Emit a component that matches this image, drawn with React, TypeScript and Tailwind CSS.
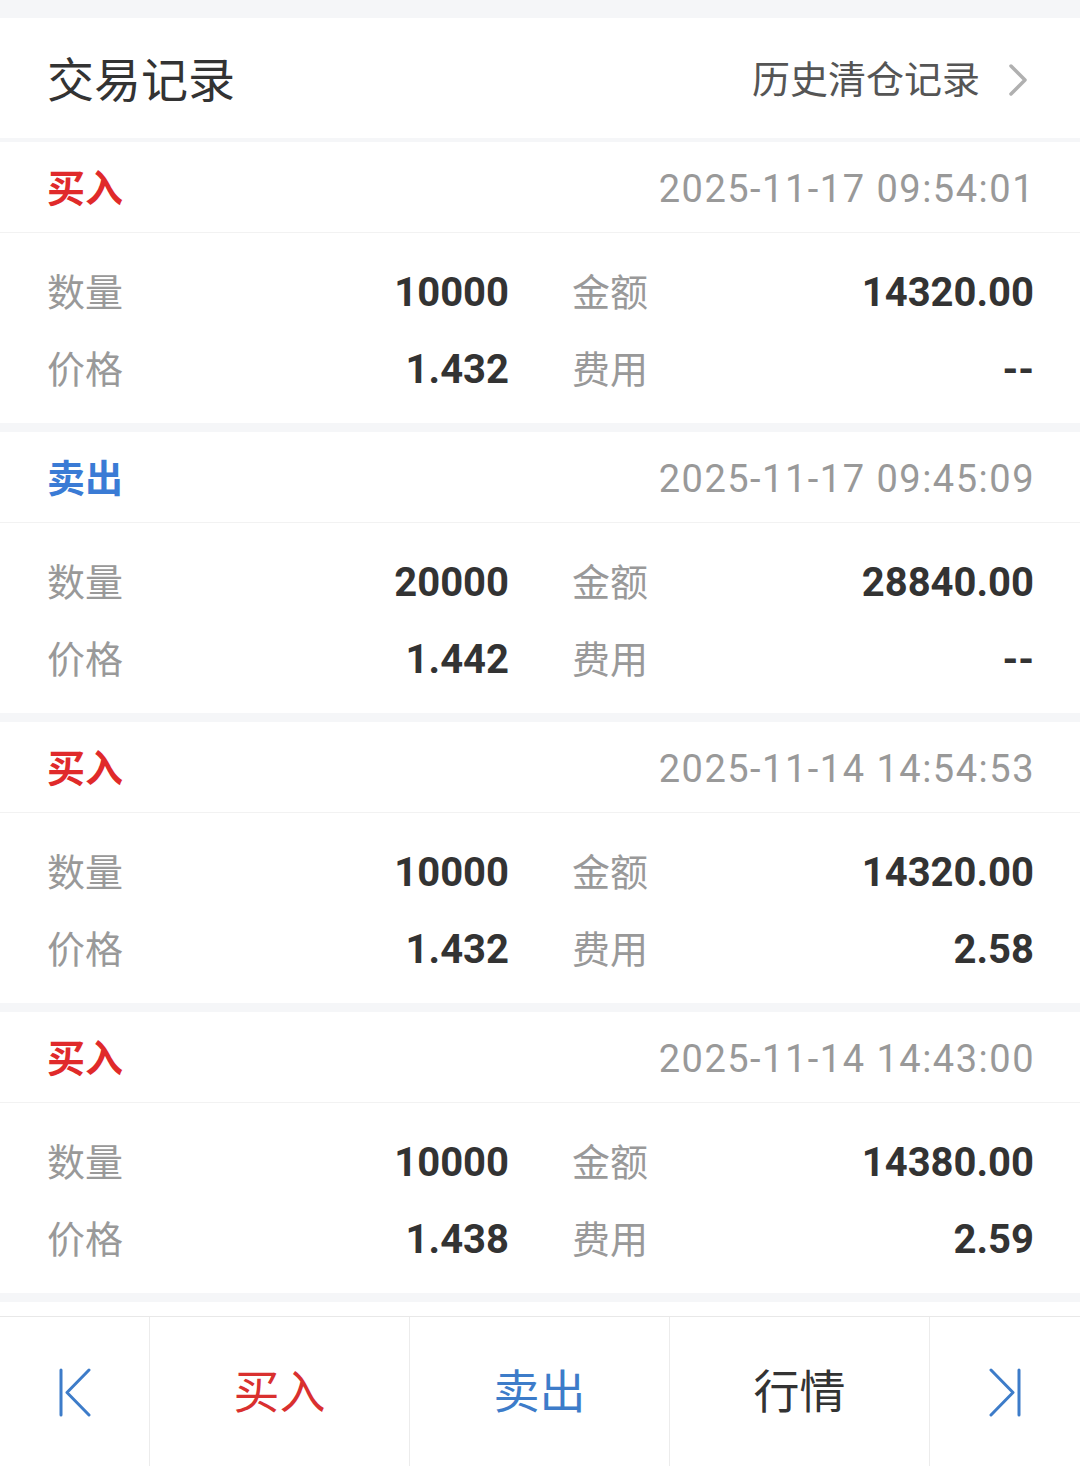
import React from "react";

type Rec = {
  type: "buy" | "sell";
  time: string;
  qty: string;
  amount: string;
  price: string;
  fee: string;
};

const records: Rec[] = [
  { type: "buy", time: "2025-11-17 09:54:01", qty: "10000", amount: "14320.00", price: "1.432", fee: "--" },
  { type: "sell", time: "2025-11-17 09:45:09", qty: "20000", amount: "28840.00", price: "1.442", fee: "--" },
  { type: "buy", time: "2025-11-14 14:54:53", qty: "10000", amount: "14320.00", price: "1.432", fee: "2.58" },
  { type: "buy", time: "2025-11-14 14:43:00", qty: "10000", amount: "14380.00", price: "1.438", fee: "2.59" },
];

const font = "font-['Roboto','Noto_Sans_CJK_SC',sans-serif]";

function Card({ r }: { r: Rec }) {
  return (
    <div className="bg-white">
      <div className="h-[91px] pt-[3px] flex items-center justify-between px-[47px] border-b border-[#f2f2f2]">
        <span
          className={
            "text-[38px] font-bold leading-none " +
            (r.type === "buy" ? "text-[#e02a2a]" : "text-[#3a7bd5]")
          }
        >
          {r.type === "buy" ? "买入" : "卖出"}
        </span>
        <span className="text-[38px] leading-none tracking-[1.5px] -mr-[2px] text-[#999999]">{r.time}</span>
      </div>
      <div className="pt-[21px] pb-[15px] px-[47px] grid grid-cols-[462px_462px] gap-x-[63px]">
        <div className="h-[77px] flex items-center justify-between">
          <span className="text-[38px] text-[#999999] leading-none">数量</span>
          <span className="text-[40px] font-bold text-[#333333] leading-none">{r.qty}</span>
        </div>
        <div className="h-[77px] flex items-center justify-between">
          <span className="text-[38px] text-[#999999] leading-none">金额</span>
          <span className="text-[40px] font-bold text-[#333333] leading-none">{r.amount}</span>
        </div>
        <div className="h-[77px] flex items-center justify-between">
          <span className="text-[38px] text-[#999999] leading-none">价格</span>
          <span className="text-[40px] font-bold text-[#333333] leading-none">{r.price}</span>
        </div>
        <div className="h-[77px] flex items-center justify-between">
          <span className="text-[38px] text-[#999999] leading-none">费用</span>
          <span className="text-[40px] font-bold text-[#333333] leading-none">{r.fee}</span>
        </div>
      </div>
    </div>
  );
}

export default function App() {
  return (
    <div className={"w-[1080px] h-[1466px] bg-[#f5f6f8] flex flex-col overflow-hidden " + font}>
      <div className="h-[18px] shrink-0" />
      <div className="h-[120px] shrink-0 bg-white flex items-center justify-between pl-[47px] pr-[52px] pt-[4px]">
        <span className="text-[47px] text-[#333333] leading-none">交易记录</span>
        <div className="flex items-center gap-[28px]">
          <span className="text-[38px] text-[#555555] leading-none">历史清仓记录</span>
          <svg width="20" height="32" viewBox="0 0 20 32" fill="none">
            <path d="M3 2 L17 16 L3 30" stroke="#b0b0b0" strokeWidth="3.5" strokeLinecap="round" strokeLinejoin="round" />
          </svg>
        </div>
      </div>
      <div className="h-[4px] shrink-0" />
      <div className="flex flex-col gap-[9px] shrink-0">
        {records.map((r, i) => (
          <Card key={i} r={r} />
        ))}
      </div>
      <div className="h-[9px] shrink-0" />
      <div className="h-[14px] shrink-0 bg-white" />
      <div className="flex-1 bg-white border-t border-[#e8e8e8] grid grid-cols-[150px_260px_260px_260px_150px]">
        <div className="flex items-center justify-center border-r border-[#ececec]">
          <svg width="40" height="50" viewBox="0 0 40 50" fill="none">
            <path d="M6 3 L6 48" stroke="#3d7cc9" strokeWidth="3" strokeLinecap="round" />
            <path d="M34 3 L12 25.5 L34 48" stroke="#3d7cc9" strokeWidth="3" strokeLinecap="round" strokeLinejoin="round" />
          </svg>
        </div>
        <div className="flex items-center justify-center border-r border-[#ececec] text-[46px] text-[#d9302f] leading-none">
          买入
        </div>
        <div className="flex items-center justify-center border-r border-[#ececec] text-[46px] text-[#3d7cc9] leading-none">
          卖出
        </div>
        <div className="flex items-center justify-center border-r border-[#ececec] text-[46px] text-[#333333] leading-none">
          行情
        </div>
        <div className="flex items-center justify-center">
          <svg width="40" height="50" viewBox="0 0 40 50" fill="none">
            <path d="M34 3 L34 48" stroke="#3d7cc9" strokeWidth="3" strokeLinecap="round" />
            <path d="M6 3 L28 25.5 L6 48" stroke="#3d7cc9" strokeWidth="3" strokeLinecap="round" strokeLinejoin="round" />
          </svg>
        </div>
      </div>
    </div>
  );
}
